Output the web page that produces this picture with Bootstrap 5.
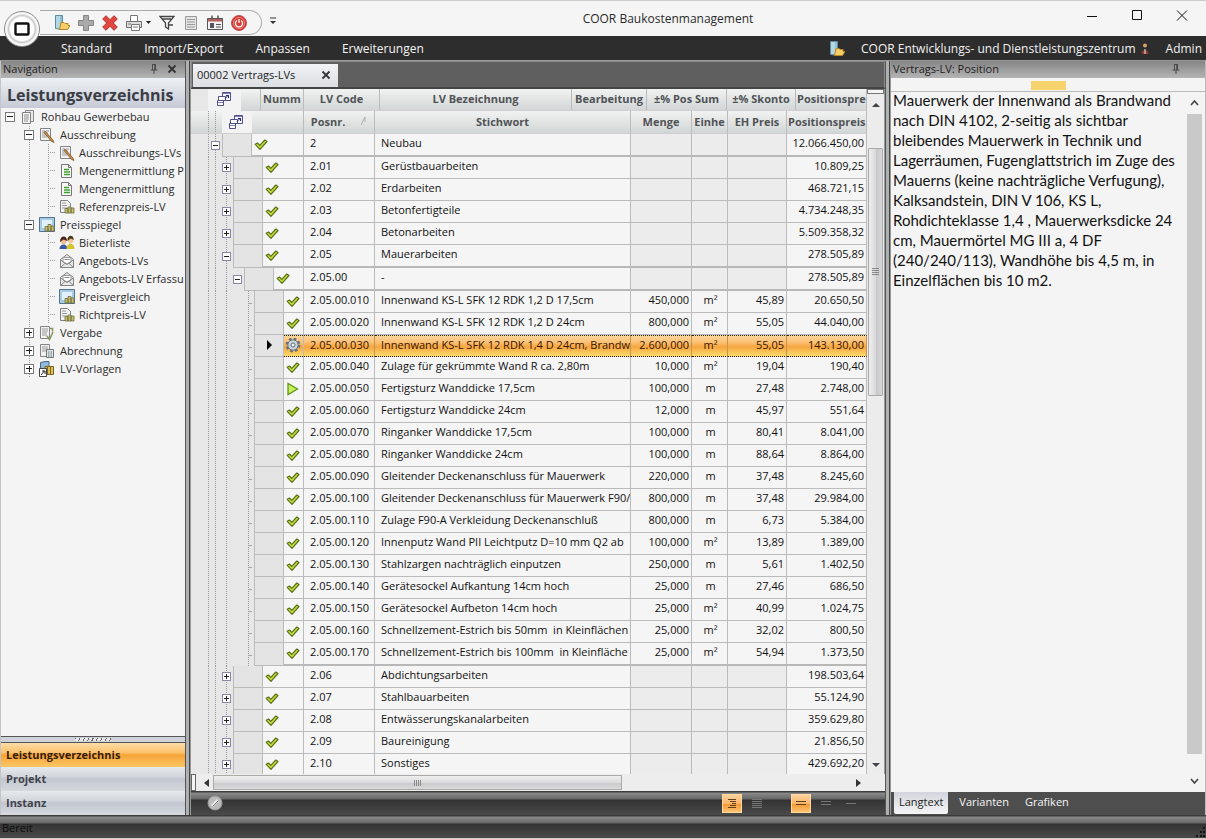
<!DOCTYPE html>
<html lang="de">
<head>
<meta charset="utf-8">
<meta name="viewport" content="width=device-width, initial-scale=1">
<title>COOR Baukostenmanagement</title>
<link href="https://cdn.jsdelivr.net/npm/bootstrap@5.3.0/dist/css/bootstrap.min.css" rel="stylesheet">
<style>
  body { font-family: "Open Sans", "Noto Sans", sans-serif; font-size: 12px; line-height: 18px; color: #2b2b2b; background: #f4f4f4; }
  button { background: none; border: 0; padding: 0; color: inherit; }
  a { color: inherit; text-decoration: none; }
  svg { display: block; flex: none; }
  .ic { width: 16px; height: 16px; }
  .minh0 { min-height: 0; min-width: 0; }

  /* title bar */
  .titlebar { height: 36px; background: #f5f5f5; border-top: 1px solid #ccc; }
  .orb { width: 36px; height: 36px; left: 4px; top: 11px; z-index: 3; border-radius: 50%; border: 1px solid #8a8a8a;
         background: radial-gradient(circle, #fff 48%, #c9c9c9 56%, #fafafa 64%, #e2e2e2 100%); }
  .quick { height: 25px; margin: 9px 0 0 40px; padding: 0 14px; border: 1px solid #aaa; border-left: 0; border-radius: 0 13px 13px 0; gap: 8px; }
  .caption { font-size: 12px; padding: 9px 24px 0 0; }
  .winbtns { gap: 29px; padding-right: 16px; }

  /* menu bar */
  .menubar { height: 25px; background: #2d2d2d; color: #f2f2f2; padding: 3px 4px 0 45px; border-bottom: 1px solid #999; }
  .menubar a { padding: 0 16px; }

  .pane-head { height: 17px; line-height: 16px; font-size: 11px; color: #222; background: linear-gradient(#858585, #b4b4b4); padding: 0 4px 0 2px; }
  .splitbar { width: 6px; background: linear-gradient(90deg, #555 0 1px, #aeb0b2 1px 4px, #444 4px 5px, #999 5px); cursor: col-resize; }

  /* navigation */
  .navpane { width: 185px; border-left: 1px solid #c5c5c5; }
  .navtitle { height: 30px; line-height: 34px; padding-left: 6px; font-size: 16px; font-weight: 700; color: #3a3d45; background: linear-gradient(#eef1f4, #dcdfe6 45%, #c6cad6); }
  .tree { background: #f4f4f4; }
  .tree li { height: 18px; gap: 5px; white-space: nowrap; font-size: 11px; }
  .tree .d0 { padding-left: 4px; }
  .tree .d1 { padding-left: 23px; }
  .tree .d2 { padding-left: 47px; gap: 4px; }
  .tree .d1 { background: repeating-linear-gradient(#999 0 1px, transparent 1px 2px) 28px 0 / 1px 100% no-repeat; }
  .tree .d2 { background: repeating-linear-gradient(#999 0 1px, transparent 1px 2px) 28px 0 / 1px 100% no-repeat,
                          repeating-linear-gradient(#999 0 1px, transparent 1px 2px) 47px 0 / 1px 100% no-repeat; }
  .stub { width: 8px; height: 1px; flex: none; background: repeating-linear-gradient(90deg, #999 0 1px, transparent 1px 2px); margin-right: -1px; }
  .expander { width: 10px; height: 10px; flex: none; border: 1px solid #777; background:
      linear-gradient(#222, #222) 50% 50% / 6px 1px no-repeat, #fff; }
  .expander.plus { background: linear-gradient(#222, #222) 50% 50% / 6px 1px no-repeat, linear-gradient(#222, #222) 50% 50% / 1px 6px no-repeat, #fff; }
  .grip { height: 7px; border-top: 1px solid #555; border-bottom: 1px solid #555; background: #cfd2da; }
  .grip span { width: 36px; height: 3px; background: repeating-linear-gradient(115deg, #666 0 1px, #e8e8e8 1px 4px); }
  .stack button { height: 24px; padding-left: 5px; text-align: left; font-size: 11px; font-weight: 700; color: #3e434c; background: linear-gradient(#e6e9ed, #d3d6dc 40%, #c2c6cf 50%, #d5d8dd); }
  .stack button.on { color: #351c08; background: linear-gradient(#fedda8, #fcc16c 40%, #f7a437 50%, #fbc665); }

  /* document area */
  .doctabs { height: 28px; background: #5f5f5f; border: 1px solid #8a8a8a; border-bottom: 1px solid #444; border-width: 1px 1px 2px; padding: 2px 0 0 1px; }
  .doctab { width: 145px; height: 23px; padding: 0 7px 0 4px; font-size: 11px; color: #222; background: linear-gradient(#f1f3f5, #dcdfe3); }
  .sheet { background: #e7e7e7; }
  .grid { width: 100%; table-layout: fixed; border-collapse: separate; border-spacing: 0; font-size: 11px; line-height: 18px; color: #111; }
  .grid th, .grid td { height: 22px; padding: 0 2px 2px 6px; overflow: hidden; white-space: pre; border-right: 1px solid #bbb; border-bottom: 1px solid #bbb; }
  .grid td { background: #f5f5f5; }
  .grid th { padding: 0 1px; text-align: center; color: #505356; background: linear-gradient(#f1f3f3, #e2e4e4 50%, #d3d6d6); border-bottom-color: #d0d0d0; }
  .grid th.blank, .grid th.pick { background: #e7e7e7; border-color: transparent; }
  .grid th.pick, .pick-cell { background: #f3f3f3; }
  .pick-cell { width: 30px; padding: 3px 0 0 6px; }
  .grid td.treecell { padding: 0; background: #e7e7e7; border-bottom: 0; }
  .grid td.num { text-align: right; padding: 0 2px 2px 0; }
  .grid td.unit { text-align: center; padding: 0 0 2px 2px; }
  .grid td.off { background: #ececec; }
  .grid .step td { height: 23px; border-bottom: 2px solid #b8b8b8; }
  .grid .step td.treecell { border-bottom: 0; }
  .indent { --dots: repeating-linear-gradient(#999 0 1px, transparent 1px 2px); padding-right: 2px;
            background: var(--dots) 17px 0 / 1px 100% no-repeat, var(--dots) 24px 0 / 1px 100% no-repeat; }
  .lv1 .indent { width: 31px; }
  .lv2 .indent { width: 42px; }
  .lv3 .indent { width: 53px; }
  .lv4 .indent { width: 63px; }
  .lv2 .indent, .lv3 .indent { background: var(--dots) 17px 0 / 1px 100% no-repeat, var(--dots) 24px 0 / 1px 100% no-repeat, var(--dots) 35px 0 / 1px 100% no-repeat; }
  .lv4 .indent { background: var(--dots) 17px 0 / 1px 100% no-repeat, var(--dots) 24px 0 / 1px 100% no-repeat, var(--dots) 35px 0 / 1px 100% no-repeat,
                 var(--dots) 57px 0 / 1px 100% no-repeat, linear-gradient(#aaa, #aaa) 58px 12px / 3px 1px no-repeat; }
  .treeflex { height: 22px; }
  .step .treeflex { height: 23px; }
  .indent .expander { width: 9px; height: 9px; border-color: #88a; background-size: 5px 1px, auto; }
  .indent .expander.plus { background-size: 5px 1px, 1px 5px, auto; }
  .rowhead { width: 30px; border: 1px solid #bbb; border-top: 0; background: #e4e4e4; flex: none; }
  .mark-cell { background: #f5f5f5; border-bottom: 1px solid #bbb; padding: 0 0 1px 1px; }
  .step .mark-cell { border-bottom: 2px solid #b8b8b8; }
  .current { --sel: linear-gradient(#fbd49a, #fcc276 30%, #f6a640 55%, #fbdc6c); }
  .grid .current td:not(.treecell), .current .mark-cell { background: var(--sel); color: #3a1503; border-top: 1px dotted #221; border-bottom: 1px dotted #221; border-right-color: #c9924d; }
  .grid .current td:not(.treecell) { padding-bottom: 3px; line-height: 17px; }

  .vbar { width: 18px; border-right: 1px solid #999; background: #ececec; }
  .vbar .cap { height: 5px; width: 17px; border: 1px solid #777; background: #f5f5f5; }
  .vbar .thumb { height: 248px; margin-top: 40px; width: 15px; border: 1px solid #aaa; border-radius: 1px; background: linear-gradient(90deg, #efefef, #d9d9db 50%, #c7c7cb 55%, #d8d8da); }
  .hbar { height: 17px; background: #ededed; }
  .hbar .cap { width: 5px; border: 1px solid #666; background: #f5f5f5; }
  .hbar .thumb { width: 59%; height: 15px; border: 1px solid #aaa; background: linear-gradient(#efefef, #dcdcde 50%, #cacacd 55%, #dadadb); }
  .darkbar { height: 24px; background: linear-gradient(#3c3c3c 0 1px, #8a8a8a 2px, #666 8px, #333 9px, #4a4a4a); }
  .tools { gap: 5px; }
  .toolgap { width: 14px; }
  .toolbtn { width: 20px; height: 19px; }
  .toolbtn.on { background: linear-gradient(#fcd3a0, #f9b566 50%, #f39a36 55%, #fcc470); border: 1px solid #ffd9a0; }

  /* detail pane */
  .detail { width: 315px; flex: none; background: #f4f4f4; border-right: 1px solid #bbb; }
  .strip { height: 14px; padding-bottom: 1px; border-bottom: 1px solid #bbb; }
  .strip span { width: 35px; height: 9px; background: #f6d36c; }
  .longtext { font-family: Lato, "Open Sans", sans-serif; font-size: 15px; line-height: 20px; color: #111; padding-left: 2px; margin-top: -2px; white-space: nowrap; }
  .sbar { width: 19px; padding-right: 2px; }
  .sbar .rail { width: 15px; background: #c9c9c9; }
  .foottabs { height: 23px; background: #4e4e4e; color: #f5f5f5; font-size: 11px; padding-left: 3px; }
  .foottabs a { padding: 0 8px; line-height: 20px; height: 22px; }
  .foottabs a.on { padding: 0 5px; margin-right: 3px; color: #222; background: linear-gradient(#d2d5de, #f5f5f5); border-radius: 0 0 2px 2px; }
  .status { height: 24px; font-size: 11px; color: #0d0d0d; padding: 4px 0 0 2px; border-bottom: 1px solid #ccc; }
</style>
</head>
<body>
<svg width="0" height="0" class="position-absolute" aria-hidden="true">
  <symbol id="check" viewBox="0 0 16 16"><path d="M2.200 8.300 4.500 7l2.300 2.400L11.800 4l2.200 1.500L7 13.300z" fill="#c3dc3c" stroke="#5a7218" stroke-width="1.200" stroke-linejoin="round"/></symbol>
  <symbol id="play" viewBox="0 0 16 16"><path d="M3 2.500v11l9.500-5.500z" fill="#c9ee5a" stroke="#5f9a16" stroke-width="1.300"/></symbol>
  <symbol id="gear" viewBox="0 0 16 16"><circle cx="8" cy="8" r="6.200" fill="none" stroke="#65707a" stroke-width="2.400" stroke-dasharray="2.600 2.270"/><circle cx="8" cy="8" r="5.200" fill="#c6d4dd" stroke="#65707a"/><circle cx="8" cy="8" r="2" fill="#eef3f6" stroke="#65707a"/></symbol>
  <symbol id="docs" viewBox="0 0 16 16"><path d="M5.500 1.500h8v11h-8z" fill="#e8e8e8" stroke="#8a8a8a"/><path d="M2.500 3.500h8v11h-8z" fill="#f6f6f6" stroke="#808080"/><path d="M4 6h5M4 8h5M4 10h5M4 12h4" stroke="#8d8d8d"/></symbol>
  <symbol id="pen" viewBox="0 0 16 16"><path d="M1.500 1.500h10v12h-10z" fill="#f2f2f2" stroke="#858585"/><path d="M3 4h3M3 6h6M3 8h6M3 10h5M7 4h3" stroke="#999"/><path d="m6 4 8 9 1 2.500-2.500-1L5 5.500z" fill="#c28b4c" stroke="#7a5025" stroke-width=".7"/></symbol>
  <symbol id="green" viewBox="0 0 16 16"><path d="M2.500 1.500h7l3 3v10h-10z" fill="#f8f8f8" stroke="#777"/><path d="M9.500 1.500v3h3" fill="none" stroke="#777"/><path d="M5 6.500h5M5 9h6M5 11.500h6" stroke="#3fa12c" stroke-width="1.700"/></symbol>
  <symbol id="coins" viewBox="0 0 16 16"><path d="M1.500 1.500h7l3 3v9h-10z" fill="#f2f2f2" stroke="#808080"/><path d="M3 4h4M3 6.500h5M3 9h5" stroke="#999"/><path d="M6 9.500h3V14H6zM9 8h3v6H9zM12 9h3v5h-3z" fill="#c9bd68" stroke="#6c6e48" stroke-width=".8"/></symbol>
  <symbol id="mirror" viewBox="0 0 16 16"><path d="M.500.500h15v14H.500z" fill="#a9cce6" stroke="#54738c"/><path d="M3 3h10v8H3z" fill="#e1f0fa"/><path d="M6 9.500h3V14H6zM9 7.500h3V14H9zM12 9h3v5h-3z" fill="#c9bd68" stroke="#6c6e48" stroke-width=".8"/></symbol>
  <symbol id="people" viewBox="0 0 16 16"><path d="M.500 14c0-6 8-6 8 0z" fill="#3558a8"/><circle cx="4.500" cy="6.500" r="2.800" fill="#f0bd95"/><path d="M1 7c0-7 7-7 7-1L4.500 4.500z" fill="#4a2418"/><path d="M7.500 14c0-7 8-7 8 0z" fill="#d5c52c"/><circle cx="11.500" cy="5.500" r="2.800" fill="#f3c69f"/><path d="M8.300 6c0-7 6.500-6.500 6.500-1l-3-1.500z" fill="#4d3a12"/></symbol>
  <symbol id="mail" viewBox="0 0 16 16"><path d="m1.500 6.500 6.500-5 6.500 5v8h-13z" fill="#e9e9e9" stroke="#858585"/><path d="M4 4.500h8V9l-4 2-4-2z" fill="#fff" stroke="#999"/><path d="M5.500 6.500h5M1.500 14.500 6.500 10M14.500 14.500 9.500 10M1.500 7 8 11.500 14.500 7" fill="none" stroke="#888"/></symbol>
  <symbol id="award" viewBox="0 0 16 16"><path d="M1.500 1.500h9v12h-9z" fill="#f2f2f2" stroke="#858585"/><path d="M3 4h6M3 6h6M3 8h5M3 10h5" stroke="#999"/><path d="m8 11 2.500 3.500L14 7M11 3.500h2.500v3" fill="none" stroke="#87955a" stroke-width="1.500"/></symbol>
  <symbol id="bill" viewBox="0 0 16 16"><path d="M1.500 1.500h9v12h-9z" fill="#f2f2f2" stroke="#858585"/><path d="M3 4h6M3 6h6M3 8h4" stroke="#999"/><path d="M7.500 6.500h7v8h-7z" fill="#dfe5e5" stroke="#6f7a7a"/><path d="M9 9h4M9 11h4M9 13h4" stroke="#6f7a7a" stroke-dasharray="1 .5"/></symbol>
  <symbol id="tmpl" viewBox="0 0 16 16"><path d="M1.500 1.500 6 .500h4v8H1.500z" fill="#8fb9da" stroke="#4c6880"/><path d="M6 5.500h8.500v8H6z" fill="#dfc14d" stroke="#77662a"/><path d="M8.500 6v7M11.500 6v7" stroke="#77662a"/><path d="M.500 7.500h7v8h-7z" fill="#fff" stroke="#444"/><path d="m2 14 3.500-4M3 10h3v3" fill="none" stroke="#222"/></symbol>
  <symbol id="open" viewBox="0 0 16 16"><path d="M1.500.500h7v14l-7-1z" fill="#8fc0d6" stroke="#5f8ba0"/><path d="M3 1v12M5 1v12" stroke="#dbedf4"/><path d="M5.500 14.500 7 7.500h3l1 1h3v2h2l-2.500 4z" fill="#f6cf68" stroke="#b98525"/></symbol>
  <symbol id="boxes" viewBox="0 0 16 16"><path d="M6.500 1.500h8v8h-8z" fill="#f5f5ff" stroke="#50508a"/><path d="M7 2.500h7" stroke="#8080b0"/><path d="M2.500 5.500h7v4h-7zM1.500 9.500h6v5h-6z" fill="#fff" stroke="#50508a"/><path d="M2 11.500h5" stroke="#8080b0"/><path d="M9 7.500 12.500 4M10 4.500h2.500V7" fill="none" stroke="#22226a"/></symbol>
  <symbol id="pin" viewBox="0 0 10 10"><path d="M3 .500h4M3.500 1v5M6.500 1v5M5.700 1v5M1.500 6h7M5 6v4" stroke="#444" stroke-width=".9" fill="none"/></symbol>
  <symbol id="cross" viewBox="0 0 10 10"><path d="m1.500 1.500 7 7m0-7-7 7" stroke="#333" stroke-width="1.800"/></symbol>
</svg>

<div class="d-flex flex-column vh-100 overflow-hidden position-relative">
  <header class="titlebar d-flex align-items-start">
    <button class="orb position-absolute d-flex align-items-center justify-content-center" aria-label="Anwendungsmenü">
      <svg width="16" height="14" viewBox="0 0 16 14"><rect x="1.500" y="1.500" width="13" height="11" rx="1" fill="#fff" stroke="#111" stroke-width="2.400"/></svg>
    </button>
    <div class="quick d-flex align-items-center">
      <button aria-label="Öffnen"><svg class="ic"><use href="#open"/></svg></button>
      <button aria-label="Neu"><svg class="ic" viewBox="0 0 16 16"><path d="M5.500.500h5v5h5v5h-5v5h-5v-5h-5v-5h5z" fill="#aaa" stroke="#858585"/></svg></button>
      <button aria-label="Löschen"><svg class="ic" viewBox="0 0 16 16"><path d="m4 .700 4 4 4-4L15.300 4l-4 4 4 4-3.300 3.300-4-4-4 4L.700 12l4-4-4-4z" fill="#e2473f" stroke="#a8332d"/></svg></button>
      <button class="d-flex align-items-center" aria-label="Drucken"><svg class="ic" viewBox="0 0 16 16"><path d="M4.500 6V.500h7V6" fill="#fff" stroke="#777"/><path d="M.500 6.500h15v6H.500z" fill="#ddd" stroke="#6d6d6d"/><path d="M5.500 9.500h8v6h-8z" fill="#fff" stroke="#777"/><path d="M7 12h5M2 9h3" stroke="#777"/></svg><svg class="ms-1" width="5" height="4" viewBox="0 0 5 4"><path d="M0 0h5L2.500 3z" fill="#222"/></svg></button>
      <button aria-label="Filter"><svg class="ic" viewBox="0 0 16 16"><path d="M1 1.500h14L9.500 8v6l-3-2V8zM3 4h9M10 10h4" fill="none" stroke="#444" stroke-width="1.300"/></svg></button>
      <button aria-label="Bericht"><svg class="ic" viewBox="0 0 16 16"><path d="M2.500 1.500h11v13h-11z" fill="#e4e4e4" stroke="#999"/><path d="M4 4.500h8M4 7h8M4 9.500h8M4 12h8" stroke="#999"/></svg></button>
      <button aria-label="Ausweis"><svg class="ic" viewBox="0 0 16 16"><path d="M.500 3.500h15v11H.500z" fill="#f2f2f2" stroke="#555"/><path d="M1 4h14v2.500H1z" fill="#b86060"/><path d="M5 .500v4M11 .500v4" stroke="#555" stroke-width="1.500"/><path d="M3 8h4v5H3z" fill="#556"/><path d="M9 9.500h5M9 12h5" stroke="#555"/></svg></button>
      <button aria-label="Beenden"><svg class="ic" viewBox="0 0 16 16"><circle cx="8" cy="8" r="7.500" fill="#d93630" stroke="#b55"/><circle cx="8" cy="8" r="5.500" fill="none" stroke="#ee8a84"/><path d="M6 5.500a3.500 3.500 0 1 0 4 0M8 4v4" fill="none" stroke="#fff" stroke-width="1.300"/></svg></button>
    </div>
    <button class="ms-1 mt-3 ps-1" aria-label="Symbolleiste anpassen"><svg width="6" height="8" viewBox="0 0 6 8"><path d="M0 1h6" stroke="#333"/><path d="M0 4h6L3 7z" fill="#333"/></svg></button>
    <div class="caption flex-grow-1 text-center">COOR Baukostenmanagement</div>
    <div class="winbtns d-flex align-items-center pt-2">
      <button aria-label="Minimieren"><svg class="ic" viewBox="0 0 16 16"><path d="M3 7.500h10" stroke="#111"/></svg></button>
      <button aria-label="Maximieren"><svg class="ic" viewBox="0 0 16 16"><path d="M3.500 1.500h9v9h-9z" fill="none" stroke="#111"/></svg></button>
      <button aria-label="Schließen"><svg class="ic" viewBox="0 0 16 16"><path d="m3 1.500 10 10m0-10-10 10" stroke="#111"/></svg></button>
    </div>
  </header>

  <nav class="menubar d-flex align-items-center flex-shrink-0">
    <a href="#">Standard</a><a href="#">Import/Export</a><a href="#">Anpassen</a><a href="#">Erweiterungen</a>
    <svg class="ic ms-auto"><use href="#open"/></svg>
    <span class="ms-3">COOR Entwicklungs- und Dienstleistungszentrum</span>
    <svg class="ms-1" width="10" height="12" viewBox="0 0 10 12"><circle cx="5" cy="2.500" r="2" fill="#d9a066"/><path d="M1.500 11C1 5.500 9 5.500 8.500 11z" fill="#8a3b30"/><path d="M5 6v5" stroke="#eee"/></svg>
    <span class="ms-3">Admin</span>
  </nav>

  <main class="d-flex flex-grow-1 minh0">
    <aside class="navpane d-flex flex-column flex-shrink-0">
      <div class="pane-head d-flex align-items-center"><span>Navigation</span>
        <button class="ms-auto me-2" aria-label="Anheften"><svg width="10" height="10"><use href="#pin"/></svg></button>
        <button class="me-1" aria-label="Navigation schließen"><svg width="10" height="10"><use href="#cross"/></svg></button>
      </div>
      <div class="navtitle flex-shrink-0">Leistungsverzeichnis</div>
      <ul class="tree list-unstyled m-0 flex-grow-1 overflow-hidden" id="tree"></ul>
      <div class="grip d-flex align-items-center justify-content-center flex-shrink-0"><span></span></div>
      <div class="stack d-flex flex-column flex-shrink-0">
        <button class="on">Leistungsverzeichnis</button><button>Projekt</button><button>Instanz</button>
      </div>
    </aside>
    <div class="splitbar flex-shrink-0"></div>

    <section class="d-flex flex-column flex-grow-1 minh0">
      <div class="doctabs flex-shrink-0"><div class="doctab d-flex align-items-center justify-content-between"><span>00002 Vertrags-LVs</span>
        <button aria-label="Tab schließen"><svg width="10" height="10"><use href="#cross"/></svg></button></div></div>
      <div class="sheet d-flex flex-grow-1 minh0 overflow-hidden">
        <div class="flex-grow-1 minh0 overflow-hidden">
          <table class="grid">
            <colgroup><col style="width:17px"><col style="width:33px"><col style="width:20px"><col style="width:43px"><col style="width:76px"><col><col style="width:75px"><col style="width:80px"><col style="width:69px"><col style="width:71px"></colgroup>
            <tr><th class="blank"></th><th class="pick"><svg class="ic mx-auto"><use href="#boxes"/></svg></th><th></th><th>Numm</th><th>LV Code</th><th>LV Bezeichnung</th><th>Bearbeitung</th><th>±% Pos Sum</th><th>±% Skonto</th><th class="text-end">Positionspre</th></tr>
          </table>
          <table class="grid">
            <colgroup><col style="width:113px"><col style="width:71px"><col><col style="width:61px"><col style="width:36px"><col style="width:59px"><col style="width:80px"></colgroup>
            <thead><tr>
              <th class="p-0"><div class="treeflex lv1 d-flex"><div class="sheet indent flex-shrink-0"></div><div class="pick-cell"><svg class="ic"><use href="#boxes"/></svg></div></div></th>
              <th><div class="d-flex justify-content-center">Posnr.<svg class="ms-3 mt-1" width="6" height="8" viewBox="0 0 6 8"><path d="M0 8 4 0v5" fill="none" stroke="#aaa"/></svg></div></th>
              <th>Stichwort</th><th>Menge</th><th>Einhe</th><th>EH Preis</th><th>Positionspreis</th></tr></thead>
            <tbody id="rows"></tbody>
          </table>
        </div>
        <div class="vbar d-flex flex-column align-items-center flex-shrink-0">
          <div class="cap flex-shrink-0"></div>
          <svg class="mt-2" width="8" height="6" viewBox="0 0 8 6"><path d="M0 5h8L4 1z" fill="#444"/></svg>
          <div class="thumb d-flex align-items-center justify-content-center flex-shrink-0"><svg width="7" height="8" viewBox="0 0 7 8"><path d="M0 .5h7M0 2.500h7M0 4.500h7M0 6.500h7" stroke="#888"/></svg></div>
          <svg class="mt-auto mb-1" width="8" height="8" viewBox="0 0 8 8"><path d="M0 1h8L4 5z" fill="#445"/></svg>
        </div>
      </div>
      <div class="hbar d-flex align-items-center flex-shrink-0">
        <div class="cap align-self-stretch"></div>
        <svg class="ms-2 me-1" width="5" height="8" viewBox="0 0 5 8"><path d="M5 0v8L0 4z" fill="#333"/></svg>
        <div class="thumb d-flex align-items-center justify-content-center"><svg width="8" height="6" viewBox="0 0 8 6"><path d="M.5 0v6M2.500 0v6M4.500 0v6M6.500 0v6" stroke="#888"/></svg></div>
        <svg class="ms-auto me-4" width="5" height="8" viewBox="0 0 5 8"><path d="M0 0v8l5-4z" fill="#333"/></svg>
      </div>
      <div class="darkbar d-flex align-items-center flex-shrink-0 px-3">
        <svg class="ic" viewBox="0 0 16 16"><circle cx="8" cy="8" r="7" fill="#bbb" stroke="#999"/><path d="m5 11 6-6" stroke="#eee" stroke-width="2.500"/><path d="m5.500 11.500 6-6" stroke="#777"/></svg>
        <div class="tools ms-auto d-flex align-items-center me-2">
          <button class="toolbtn on" aria-label="Baumansicht"><svg width="18" height="17" viewBox="0 0 18 17"><path d="M5 4.500h8M7 6.500h6M9 8.500h4M7 10.500h6M5 12.500h8" stroke="#614322"/></svg></button>
          <button class="toolbtn" aria-label="Listenansicht"><svg width="20" height="19" viewBox="0 0 20 19"><path d="M5 5.500h10M5 7.500h10M5 9.500h10M5 11.500h10M5 13.500h10" stroke="#777"/></svg></button>
          <span class="toolgap"></span>
          <button class="toolbtn on" aria-label="Zeilen hoch"><svg width="18" height="17" viewBox="0 0 18 17"><path d="M4 6.500h10M4 9.500h10" stroke="#614322"/></svg></button>
          <button class="toolbtn" aria-label="Zeilen mittel"><svg width="20" height="19" viewBox="0 0 20 19"><path d="M5 7.500h10M5 10.500h10" stroke="#777"/></svg></button>
          <button class="toolbtn" aria-label="Zeilen flach"><svg width="20" height="19" viewBox="0 0 20 19"><path d="M5 9.500h10" stroke="#777"/></svg></button>
        </div>
      </div>
    </section>
    <div class="splitbar flex-shrink-0"></div>

    <aside class="detail d-flex flex-column">
      <div class="pane-head d-flex align-items-center"><span>Vertrags-LV: Position</span><button class="ms-auto me-3 pe-1" aria-label="Anheften"><svg width="10" height="10"><use href="#pin"/></svg></button></div>
      <div class="strip d-flex align-items-end justify-content-center flex-shrink-0"><span></span></div>
      <div class="d-flex flex-grow-1 minh0">
        <p class="longtext flex-grow-1 mb-0 minh0">Mauerwerk der Innenwand als Brandwand<br>nach DIN 4102, 2-seitig als sichtbar<br>bleibendes Mauerwerk in Technik und<br>Lagerräumen, Fugenglattstrich im Zuge des<br>Mauerns (keine nachträgliche Verfugung),<br>Kalksandstein, DIN V 106, KS L,<br>Rohdichteklasse 1,4 , Mauerwerksdicke 24<br>cm, Mauermörtel MG III a, 4 DF<br>(240/240/113), Wandhöhe bis 4,5 m, in<br>Einzelflächen bis 10 m2.</p>
        <div class="sbar d-flex flex-column align-items-center flex-shrink-0">
          <svg class="my-2" width="9" height="6" viewBox="0 0 9 6"><path d="m1 5 3.500-4L8 5" fill="none" stroke="#444" stroke-width="1.600"/></svg>
          <div class="rail flex-grow-1"></div>
          <svg class="mt-4 mb-2" width="9" height="6" viewBox="0 0 9 6"><path d="m1 1 3.500 4L8 1" fill="none" stroke="#444" stroke-width="1.600"/></svg>
        </div>
      </div>
      <nav class="foottabs d-flex flex-shrink-0"><a href="#" class="on">Langtext</a><a href="#">Varianten</a><a href="#">Grafiken</a></nav>
    </aside>
  </main>
  <footer class="darkbar status d-flex justify-content-between flex-shrink-0"><span>Bereit</span>
    <svg class="align-self-end" width="12" height="12" viewBox="0 0 12 12"><path d="M9 1h2v2H9zM6 5h2v2H6zM9 5h2v2H9zM2 9h2v2H2zM6 9h2v2H6zM9 9h2v2H9z" fill="#151515"/></svg>
  </footer>
</div>

<script>
// depth | expander (-, + or none) | icon | label
const nav = `0|-|docs|Rohbau Gewerbebau
1|-|pen|Ausschreibung
2||pen|Ausschreibungs-LVs
2||green|Mengenermittlung P
2||green|Mengenermittlung
2||coins|Referenzpreis-LV
1|-|mirror|Preisspiegel
2||people|Bieterliste
2||mail|Angebots-LVs
2||mail|Angebots-LV Erfassu
2||mirror|Preisvergleich
2||coins|Richtpreis-LV
1|+|award|Vergabe
1|+|bill|Abrechnung
1|+|tmpl|LV-Vorlagen`;
const exp = s => s ? `<button class="expander ${s === '+' ? 'plus' : ''}" aria-label="${s === '+' ? 'Aufklappen' : 'Zuklappen'}"></button>` : '';
document.getElementById('tree').innerHTML = nav.split('\n').map(l => {
  const [d, e, i, t] = l.split('|');
  return `<li class="d${d} d-flex align-items-center">${e ? exp(e) : '<span class="stub"></span>'}<svg class="ic"><use href="#${i}"/></svg><a href="#">${t}</a></li>`;
}).join('');

// level | expander | number | text | quantity | unit | unit price | total
const data = `1|-|2|Neubau||||12.066.450,00
2|+|2.01|Gerüstbauarbeiten||||10.809,25
2|+|2.02|Erdarbeiten||||468.721,15
2|+|2.03|Betonfertigteile||||4.734.248,35
2|+|2.04|Betonarbeiten||||5.509.358,32
2|-|2.05|Mauerarbeiten||||278.505,89
3|-|2.05.00|-||||278.505,89
4||2.05.00.010|Innenwand KS-L SFK 12 RDK 1,2 D 17,5cm|450,000|m²|45,89|20.650,50
4||2.05.00.020|Innenwand KS-L SFK 12 RDK 1,2 D 24cm|800,000|m²|55,05|44.040,00
4||2.05.00.030|Innenwand KS-L SFK 12 RDK 1,4 D 24cm, Brandw|2.600,000|m²|55,05|143.130,00
4||2.05.00.040|Zulage für gekrümmte Wand R ca. 2,80m|10,000|m²|19,04|190,40
4||2.05.00.050|Fertigsturz Wanddicke 17,5cm|100,000|m|27,48|2.748,00
4||2.05.00.060|Fertigsturz Wanddicke 24cm|12,000|m|45,97|551,64
4||2.05.00.070|Ringanker Wanddicke 17,5cm|100,000|m|80,41|8.041,00
4||2.05.00.080|Ringanker Wanddicke 24cm|100,000|m|88,64|8.864,00
4||2.05.00.090|Gleitender Deckenanschluss für Mauerwerk|220,000|m|37,48|8.245,60
4||2.05.00.100|Gleitender Deckenanschluss für Mauerwerk F90/|800,000|m|37,48|29.984,00
4||2.05.00.110|Zulage F90-A Verkleidung Deckenanschluß|800,000|m|6,73|5.384,00
4||2.05.00.120|Innenputz Wand PII Leichtputz D=10 mm Q2 ab|100,000|m²|13,89|1.389,00
4||2.05.00.130|Stahlzargen nachträglich einputzen|250,000|m|5,61|1.402,50
4||2.05.00.140|Gerätesockel Aufkantung 14cm hoch|25,000|m|27,46|686,50
4||2.05.00.150|Gerätesockel Aufbeton 14cm hoch|25,000|m²|40,99|1.024,75
4||2.05.00.160|Schnellzement-Estrich bis 50mm  in Kleinflächen|25,000|m²|32,02|800,50
4||2.05.00.170|Schnellzement-Estrich bis 100mm  in Kleinfläche|25,000|m²|54,94|1.373,50
2|+|2.06|Abdichtungsarbeiten||||198.503,64
2|+|2.07|Stahlbauarbeiten||||55.124,90
2|+|2.08|Entwässerungskanalarbeiten||||359.629,80
2|+|2.09|Baureinigung||||21.856,50
2|+|2.10|Sonstiges||||429.692,20`.split('\n').map(l => l.split('|'));
document.getElementById('rows').innerHTML = data.map(([lv, e, nr, text, qty, unit, ep, sum], i) => {
  const step = data[i + 1] && data[i + 1][0] !== lv;
  const cur = nr === '2.05.00.030';
  const icon = cur ? 'gear' : nr === '2.05.00.050' ? 'play' : 'check';
  const off = qty ? '' : 'off';
  return `<tr class="lv${lv} ${step ? 'step' : ''} ${cur ? 'current' : ''}"><td class="treecell"><div class="treeflex d-flex">
    <div class="indent flex-shrink-0 d-flex align-items-center justify-content-end">${exp(e)}</div>
    <div class="rowhead d-flex align-items-center justify-content-center">${cur ? '<svg width="5" height="10" viewBox="0 0 5 10"><path d="M0 0v10l5-5z"/></svg>' : ''}</div>
    <div class="mark-cell flex-grow-1 d-flex align-items-center"><svg class="ic"><use href="#${icon}"/></svg></div></div></td>
    <td>${nr}</td><td>${text}</td><td class="num ${off}">${qty}</td><td class="unit ${off}">${unit}</td><td class="num ${off}">${ep}</td><td class="num">${sum}</td></tr>`;
}).join('');
</script>
<script src="https://cdn.jsdelivr.net/npm/bootstrap@5.3.0/dist/js/bootstrap.bundle.min.js"></script>
</body>
</html>
